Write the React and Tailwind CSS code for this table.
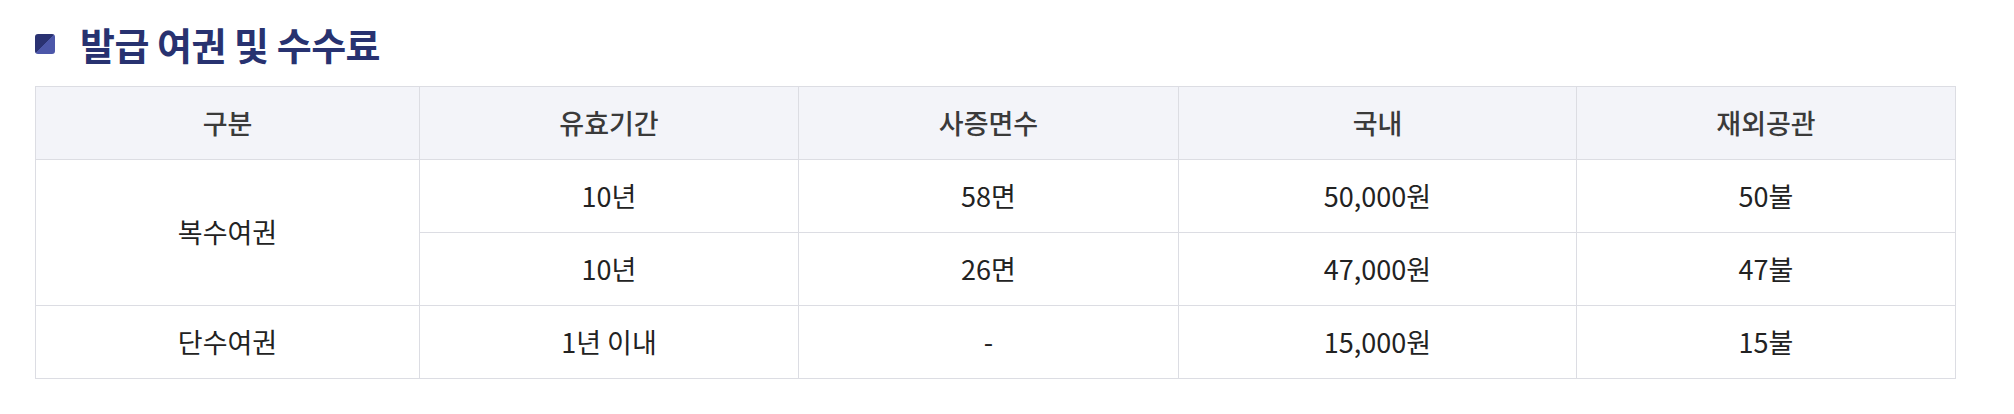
import React from 'react';

const rows = [
    { type: '복수여권', span: 2, period: '10년', pages: '58면', domestic: '50,000원', abroad: '50불' },
    { period: '10년', pages: '26면', domestic: '47,000원', abroad: '47불' },
    { type: '단수여권', span: 1, period: '1년 이내', pages: '-', domestic: '15,000원', abroad: '15불' },
];

const headers = ['구분', '유효기간', '사증면수', '국내', '재외공관'];

const App = () => {
    return (
        <div className="w-[2014px] h-[414px] bg-white px-[35px] pt-[24px] font-['Noto_Sans_CJK_KR','Noto_Sans',sans-serif]">
            {/* Title */}
            <div className="flex items-center h-[40px] mb-[22px]">
                <span className="w-[20px] h-[20px] rounded-[3px] bg-[linear-gradient(135deg,#2a3272_50%,#4c57a9_50%)]" />
                <h2 className="ml-[25px] text-[38px] font-bold text-[#283270] tracking-[-0.5px] leading-none">
                    발급 여권 및 수수료
                </h2>
            </div>

            {/* Fee table */}
            <table className="w-[1920px] border-collapse table-fixed text-[27px] text-center">
                <colgroup>
                    <col className="w-[384px]" />
                    <col className="w-[379px]" />
                    <col className="w-[380px]" />
                    <col className="w-[398px]" />
                    <col className="w-[379px]" />
                </colgroup>
                <thead>
                    <tr className="h-[73px] bg-[#f3f4f9]">
                        {headers.map((h) => (
                            <th key={h} className="border border-[#dcdde3] font-medium text-[#3a3a3a]">
                                {h}
                            </th>
                        ))}
                    </tr>
                </thead>
                <tbody className="text-[#222]">
                    {rows.map((r, i) => (
                        <tr key={i} className="h-[73px]">
                            {r.type && (
                                <td rowSpan={r.span} className="border border-[#dcdde3]">
                                    {r.type}
                                </td>
                            )}
                            <td className="border border-[#dcdde3]">{r.period}</td>
                            <td className="border border-[#dcdde3]">{r.pages}</td>
                            <td className="border border-[#dcdde3]">{r.domestic}</td>
                            <td className="border border-[#dcdde3]">{r.abroad}</td>
                        </tr>
                    ))}
                </tbody>
            </table>
        </div>
    );
};

export default App;
